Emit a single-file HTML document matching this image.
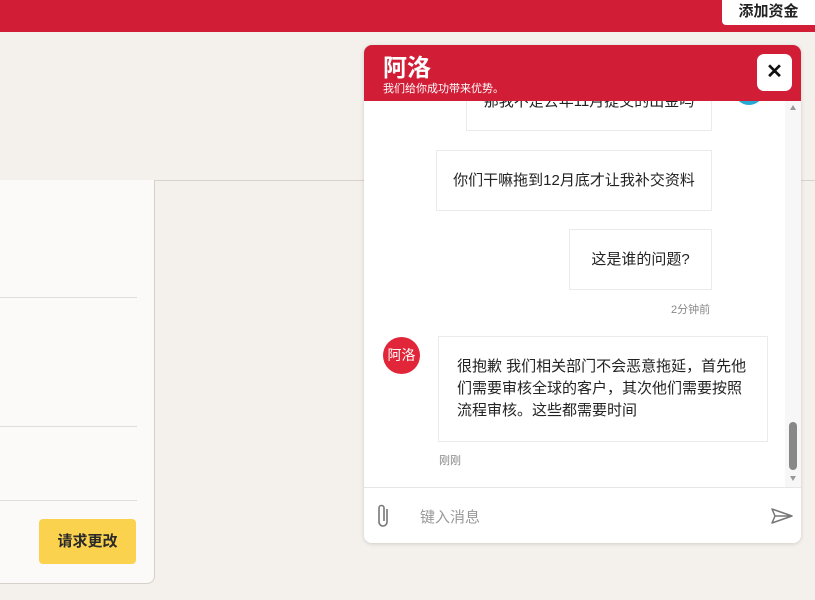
<!DOCTYPE html>
<html><head><meta charset="utf-8"><style>
*{margin:0;padding:0;box-sizing:border-box}
body{width:815px;height:600px;overflow:hidden;background:#f4f0eb;font-family:"Liberation Sans","Noto Sans CJK SC",sans-serif;position:relative}
.top{position:absolute;left:0;top:0;width:815px;height:32px;background:#d11d35}
.add{position:absolute;left:722px;top:0;width:93px;height:25px;background:#fff;border-radius:0 0 0 4px;font-size:15px;font-weight:bold;color:#222;text-align:center;line-height:23px}
.hline{position:absolute;left:0;top:180px;width:815px;height:1px;background:#d8d2cc}
.card{position:absolute;left:-10px;top:180px;width:165px;height:404px;background:#fcfaf8;border:1px solid #d6d0ca;border-top:none;border-radius:0 0 8px 0}
.card .l{position:absolute;left:0;width:146px;height:1px;background:#e2ddd8}
.btn{position:absolute;left:48px;top:339px;width:97px;height:45px;background:#fbd24e;border-radius:4px;font-size:15px;font-weight:bold;color:#2a2a2a;text-align:center;line-height:45px}
.chat{position:absolute;left:364px;top:45px;width:437px;height:498px;background:#fff;border-radius:8px;box-shadow:0 1px 4px rgba(0,0,0,.15);overflow:hidden}
.hdr{position:absolute;left:0;top:0;width:437px;height:56px;background:#d11d35;z-index:2}
.hdr .t{position:absolute;left:19px;top:3px;color:#fff;font-size:24px;font-weight:bold}
.hdr .s{position:absolute;left:19px;top:35px;color:#fff;font-size:11px}
.x{position:absolute;left:393px;top:9px;width:35px;height:37px;background:#fff;border-radius:7px;font-size:20px;font-weight:bold;text-align:center;line-height:37px;color:#111}
.b{position:absolute;background:#fff;border:1px solid #ebebeb;font-size:15px;color:#222}
.sb{position:absolute;left:421px;top:56px;width:16px;height:387px;background:#f7f7f7}
.thumb{position:absolute;left:425px;top:377px;width:8px;height:48px;background:#888;border-radius:4px}
.ts{position:absolute;font-size:11px;color:#888}
.inp{position:absolute;left:0;top:442px;width:437px;height:56px;border-top:1px solid #e6e6e6;background:#fff}
</style></head><body>
<div class="top"></div><div class="add">添加资金</div>
<div class="hline"></div>
<div class="card"><div class="l" style="top:117px"></div><div class="l" style="top:246px"></div><div class="l" style="top:320px"></div><div class="btn">请求更改</div></div>
<div class="chat">
<div class="hdr"><div class="t">阿洛</div><div class="s">我们给你成功带来优势。</div><div class="x">✕</div></div>
<div class="b" style="left:102px;top:0;width:246px;height:86px;text-align:center;padding-top:46px;line-height:20px">那我不是去年11月提交的出金吗</div>
<div style="position:absolute;left:370px;top:30px;width:30px;height:30px;border-radius:50%;background:#27a9d6"></div>
<div class="b" style="left:72px;top:105px;width:276px;height:61px;text-align:center;line-height:59px">你们干嘛拖到12月底才让我补交资料</div>
<div class="b" style="left:205px;top:184px;width:143px;height:61px;text-align:center;line-height:59px">这是谁的问题?</div>
<div class="ts" style="left:307px;top:256px">2分钟前</div>
<div style="position:absolute;left:19px;top:292px;width:37px;height:37px;border-radius:50%;background:#e02638;color:#fff;font-size:14px;text-align:center;line-height:37px">阿洛</div>
<div class="b" style="left:74px;top:291px;width:330px;height:106px;padding:19px 18px;line-height:22px">很抱歉 我们相关部门不会恶意拖延，首先他们需要审核全球的客户，其次他们需要按照流程审核。这些都需要时间</div>
<div class="ts" style="left:75px;top:407px">刚刚</div>
<div class="sb"></div>
<div style="position:absolute;left:426px;top:60px;width:0;height:0;border-left:3px solid transparent;border-right:3px solid transparent;border-bottom:5px solid #999"></div>
<div style="position:absolute;left:426px;top:431px;width:0;height:0;border-left:3px solid transparent;border-right:3px solid transparent;border-top:5px solid #999"></div>
<div class="thumb"></div>
<div class="inp">
<svg style="position:absolute;left:11px;top:15px" width="16" height="26" viewBox="0 0 16 26"><path d="M12 6v13a4 4 0 0 1-8 0V5a2.5 2.5 0 0 1 5 0v13" fill="none" stroke="#777" stroke-width="1.6"/></svg>
<div style="position:absolute;left:56px;top:18px;font-size:15px;color:#999">键入消息</div>
<svg style="position:absolute;left:407px;top:20px" width="22" height="16" viewBox="0 0 22 16"><path d="M1 1L21 8L1 15L4 8Z M4 8H21" fill="none" stroke="#777" stroke-width="1.5" stroke-linejoin="round"/></svg>
</div>
</div>
</body></html>
